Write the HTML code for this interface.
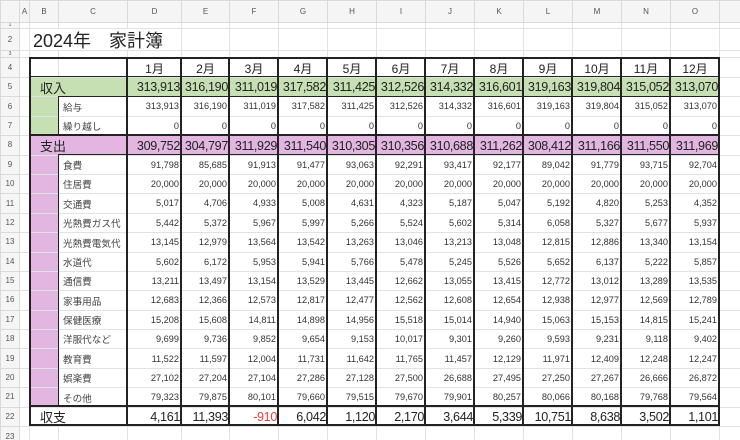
<!DOCTYPE html>
<html><head><meta charset="utf-8"><style>
html,body{margin:0;padding:0;background:#fff;width:740px;height:440px;overflow:hidden}
body{font-family:"Liberation Sans","Noto Sans CJK JP",sans-serif;position:relative}
table{position:absolute;left:0;top:0;border-collapse:collapse;table-layout:fixed;width:740px}
td{border:1px solid #e2e2e2;padding:1px 2px 0 0;white-space:nowrap;overflow:hidden;text-align:right;font-size:9.2px;color:#333;line-height:1;vertical-align:middle}
tr.h td{background:#f5f5f5;text-align:center;font-size:8px;color:#555;border-color:#dadada;padding:0}
td.rn{background:#f5f5f5;text-align:center;font-size:8px;color:#555;border-color:#dadada;padding:0}
td.g{background:#c6e0b4}
td.p{background:#e2b6e0}
td.big{font-size:12.6px;color:#222;letter-spacing:-0.35px;padding:1px 1px 0 0}
td.lab{text-align:left;padding:4px 0 0 4px;font-size:9.6px;color:#444}
td.sec{text-align:left;padding:2px 0 0 10px;font-size:13px;color:#222}
td.m{text-align:center;font-size:12px;color:#222;padding:2px 0 0 0}
.r{color:#f03c3c!important}
.b{position:absolute;background:#222}
</style></head><body>
<table>
<colgroup><col style="width:19px"><col style="width:10px"><col style="width:29px"><col style="width:69px"><col style="width:54px"><col style="width:48px"><col style="width:49px"><col style="width:49px"><col style="width:49px"><col style="width:49px"><col style="width:49px"><col style="width:49px"><col style="width:49px"><col style="width:49px"><col style="width:49px"><col style="width:49px"><col style="width:21px"></colgroup>
<tr class="h" style="height:22px"><td></td><td>A</td><td>B</td><td>C</td><td>D</td><td>E</td><td>F</td><td>G</td><td>H</td><td>I</td><td>J</td><td>K</td><td>L</td><td>M</td><td>N</td><td>O</td><td></td></tr>
<tr style="height:6px"><td class="rn" style="font-size:5px">1</td><td></td><td></td><td></td><td></td><td></td><td></td><td></td><td></td><td></td><td></td><td></td><td></td><td></td><td></td><td></td><td></td></tr>
<tr style="height:22px"><td class="rn">2</td><td></td><td colspan="3" style="text-align:left;font-size:18px;color:#222;padding:2px 0 0 3px;overflow:visible">2024年　家計簿</td><td></td><td></td><td></td><td></td><td></td><td></td><td></td><td></td><td></td><td></td><td></td><td></td></tr>
<tr style="height:7px"><td class="rn" style="font-size:5px">3</td><td></td><td></td><td></td><td></td><td></td><td></td><td></td><td></td><td></td><td></td><td></td><td></td><td></td><td></td><td></td><td></td></tr>
<tr style="height:20px"><td class="rn">4</td><td></td><td></td><td></td><td class="m">1月</td><td class="m">2月</td><td class="m">3月</td><td class="m">4月</td><td class="m">5月</td><td class="m">6月</td><td class="m">7月</td><td class="m">8月</td><td class="m">9月</td><td class="m">10月</td><td class="m">11月</td><td class="m">12月</td><td></td></tr>
<tr style="height:19.4px"><td class="rn">5</td><td></td><td class="g sec" colspan="2">収入</td><td class="g big">313,913</td><td class="g big">316,190</td><td class="g big">311,019</td><td class="g big">317,582</td><td class="g big">311,425</td><td class="g big">312,526</td><td class="g big">314,332</td><td class="g big">316,601</td><td class="g big">319,163</td><td class="g big">319,804</td><td class="g big">315,052</td><td class="g big">313,070</td><td></td></tr>
<tr style="height:19.4px"><td class="rn">6</td><td></td><td class="g"></td><td class="lab">給与</td><td>313,913</td><td>316,190</td><td>311,019</td><td>317,582</td><td>311,425</td><td>312,526</td><td>314,332</td><td>316,601</td><td>319,163</td><td>319,804</td><td>315,052</td><td>313,070</td><td></td></tr>
<tr style="height:19.4px"><td class="rn">7</td><td></td><td class="g"></td><td class="lab">繰り越し</td><td>0</td><td>0</td><td>0</td><td>0</td><td>0</td><td>0</td><td>0</td><td>0</td><td>0</td><td>0</td><td>0</td><td>0</td><td></td></tr>
<tr style="height:19.4px"><td class="rn">8</td><td></td><td class="p sec" colspan="2">支出</td><td class="p big">309,752</td><td class="p big">304,797</td><td class="p big">311,929</td><td class="p big">311,540</td><td class="p big">310,305</td><td class="p big">310,356</td><td class="p big">310,688</td><td class="p big">311,262</td><td class="p big">308,412</td><td class="p big">311,166</td><td class="p big">311,550</td><td class="p big">311,969</td><td></td></tr>
<tr style="height:19.4px"><td class="rn">9</td><td></td><td class="p"></td><td class="lab">食費</td><td>91,798</td><td>85,685</td><td>91,913</td><td>91,477</td><td>93,063</td><td>92,291</td><td>93,417</td><td>92,177</td><td>89,042</td><td>91,779</td><td>93,715</td><td>92,704</td><td></td></tr>
<tr style="height:19.4px"><td class="rn">10</td><td></td><td class="p"></td><td class="lab">住居費</td><td>20,000</td><td>20,000</td><td>20,000</td><td>20,000</td><td>20,000</td><td>20,000</td><td>20,000</td><td>20,000</td><td>20,000</td><td>20,000</td><td>20,000</td><td>20,000</td><td></td></tr>
<tr style="height:19.4px"><td class="rn">11</td><td></td><td class="p"></td><td class="lab">交通費</td><td>5,017</td><td>4,706</td><td>4,933</td><td>5,008</td><td>4,631</td><td>4,323</td><td>5,187</td><td>5,047</td><td>5,192</td><td>4,820</td><td>5,253</td><td>4,352</td><td></td></tr>
<tr style="height:19.4px"><td class="rn">12</td><td></td><td class="p"></td><td class="lab">光熱費ガス代</td><td>5,442</td><td>5,372</td><td>5,967</td><td>5,997</td><td>5,266</td><td>5,524</td><td>5,602</td><td>5,314</td><td>6,058</td><td>5,327</td><td>5,677</td><td>5,937</td><td></td></tr>
<tr style="height:19.4px"><td class="rn">13</td><td></td><td class="p"></td><td class="lab">光熱費電気代</td><td>13,145</td><td>12,979</td><td>13,564</td><td>13,542</td><td>13,263</td><td>13,046</td><td>13,213</td><td>13,048</td><td>12,815</td><td>12,886</td><td>13,340</td><td>13,154</td><td></td></tr>
<tr style="height:19.4px"><td class="rn">14</td><td></td><td class="p"></td><td class="lab">水道代</td><td>5,602</td><td>6,172</td><td>5,953</td><td>5,941</td><td>5,766</td><td>5,478</td><td>5,245</td><td>5,526</td><td>5,652</td><td>6,137</td><td>5,222</td><td>5,857</td><td></td></tr>
<tr style="height:19.4px"><td class="rn">15</td><td></td><td class="p"></td><td class="lab">通信費</td><td>13,211</td><td>13,497</td><td>13,154</td><td>13,529</td><td>13,445</td><td>12,662</td><td>13,055</td><td>13,415</td><td>12,772</td><td>13,012</td><td>13,289</td><td>13,535</td><td></td></tr>
<tr style="height:19.4px"><td class="rn">16</td><td></td><td class="p"></td><td class="lab">家事用品</td><td>12,683</td><td>12,366</td><td>12,573</td><td>12,817</td><td>12,477</td><td>12,562</td><td>12,608</td><td>12,654</td><td>12,938</td><td>12,977</td><td>12,569</td><td>12,789</td><td></td></tr>
<tr style="height:19.4px"><td class="rn">17</td><td></td><td class="p"></td><td class="lab">保健医療</td><td>15,208</td><td>15,608</td><td>14,811</td><td>14,898</td><td>14,956</td><td>15,518</td><td>15,014</td><td>14,940</td><td>15,063</td><td>15,153</td><td>14,815</td><td>15,241</td><td></td></tr>
<tr style="height:19.4px"><td class="rn">18</td><td></td><td class="p"></td><td class="lab">洋服代など</td><td>9,699</td><td>9,736</td><td>9,852</td><td>9,654</td><td>9,153</td><td>10,017</td><td>9,301</td><td>9,260</td><td>9,593</td><td>9,231</td><td>9,118</td><td>9,402</td><td></td></tr>
<tr style="height:19.4px"><td class="rn">19</td><td></td><td class="p"></td><td class="lab">教育費</td><td>11,522</td><td>11,597</td><td>12,004</td><td>11,731</td><td>11,642</td><td>11,765</td><td>11,457</td><td>12,129</td><td>11,971</td><td>12,409</td><td>12,248</td><td>12,247</td><td></td></tr>
<tr style="height:19.4px"><td class="rn">20</td><td></td><td class="p"></td><td class="lab">娯楽費</td><td>27,102</td><td>27,204</td><td>27,104</td><td>27,286</td><td>27,128</td><td>27,500</td><td>26,688</td><td>27,495</td><td>27,250</td><td>27,267</td><td>26,666</td><td>26,872</td><td></td></tr>
<tr style="height:19.4px"><td class="rn">21</td><td></td><td class="p"></td><td class="lab">その他</td><td>79,323</td><td>79,875</td><td>80,101</td><td>79,660</td><td>79,515</td><td>79,670</td><td>79,901</td><td>80,257</td><td>80,066</td><td>80,168</td><td>79,768</td><td>79,564</td><td></td></tr>
<tr style="height:19.4px"><td class="rn">22</td><td></td><td class="sec" colspan="2">収支</td><td class="big">4,161</td><td class="big">11,393</td><td class="big r">-910</td><td class="big">6,042</td><td class="big">1,120</td><td class="big">2,170</td><td class="big">3,644</td><td class="big">5,339</td><td class="big">10,751</td><td class="big">8,638</td><td class="big">3,502</td><td class="big">1,101</td><td></td></tr>
<tr style="height:20px"><td class="rn">23</td><td></td><td></td><td></td><td></td><td></td><td></td><td></td><td></td><td></td><td></td><td></td><td></td><td></td><td></td><td></td><td></td></tr>
</table>
<div class="b" style="left:29px;top:57px;width:691px;height:2px"></div>
<div class="b" style="left:29px;top:424px;width:691px;height:2px"></div>
<div class="b" style="left:29px;top:57px;width:2px;height:369px"></div>
<div class="b" style="left:718px;top:57px;width:2px;height:369px"></div>
<div class="b" style="left:29px;top:76px;width:691px;height:1px"></div>
<div class="b" style="left:58px;top:96px;width:662px;height:1px"></div>
<div class="b" style="left:29px;top:134px;width:691px;height:2px"></div>
<div class="b" style="left:58px;top:154px;width:662px;height:1px"></div>
<div class="b" style="left:29px;top:405px;width:691px;height:2px"></div>
<div class="b" style="left:58px;top:96px;width:1px;height:39px"></div>
<div class="b" style="left:58px;top:154px;width:1px;height:252px"></div>
<div class="b" style="left:126px;top:57px;width:2px;height:369px"></div>
<div class="b" style="left:180px;top:57px;width:2px;height:369px"></div>
<div class="b" style="left:228px;top:57px;width:2px;height:369px"></div>
<div class="b" style="left:277px;top:57px;width:2px;height:369px"></div>
<div class="b" style="left:326px;top:57px;width:2px;height:369px"></div>
<div class="b" style="left:375px;top:57px;width:2px;height:369px"></div>
<div class="b" style="left:424px;top:57px;width:2px;height:369px"></div>
<div class="b" style="left:473px;top:57px;width:2px;height:369px"></div>
<div class="b" style="left:522px;top:57px;width:2px;height:369px"></div>
<div class="b" style="left:571px;top:57px;width:2px;height:369px"></div>
<div class="b" style="left:620px;top:57px;width:2px;height:369px"></div>
<div class="b" style="left:669px;top:57px;width:2px;height:369px"></div>
</body></html>
